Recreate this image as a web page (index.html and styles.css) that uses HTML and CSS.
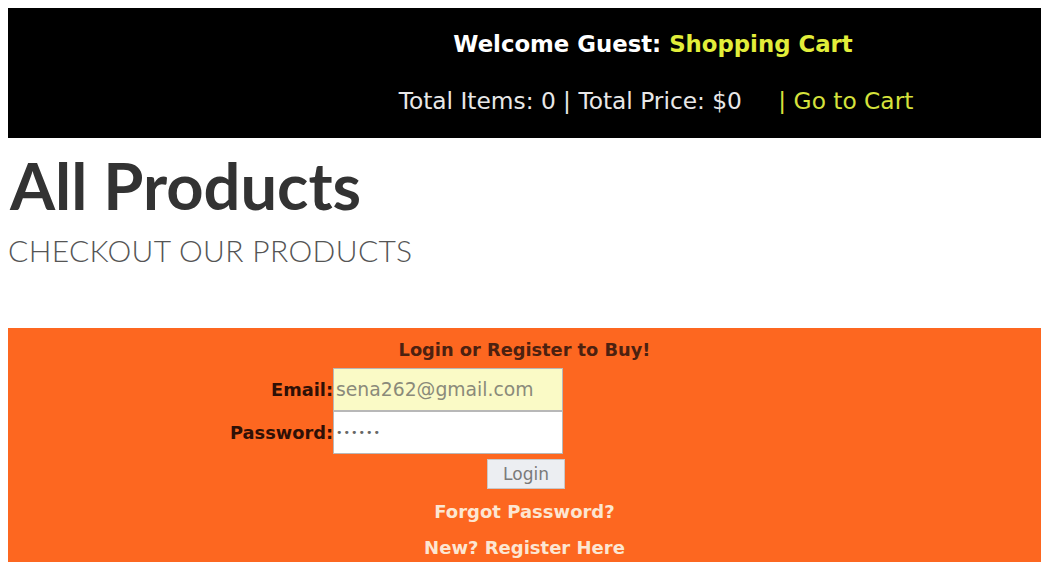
FILE: index.html
```html
<!DOCTYPE html>
<html lang="en">
<head>
<meta charset="utf-8">
<title>All Products</title>
<link rel="stylesheet" href="styles.css">
</head>
<body>
  <header class="topbar">
    <div class="cart-info">
      <p class="welcome">Welcome Guest: <span class="hl">Shopping Cart</span></p>
      <p class="totals">Total Items: 0 | Total Price: $0 <a class="cart-link" href="#">| Go to Cart</a></p>
    </div>
  </header>

  <section class="intro">
    <h1 class="title">All Products</h1>
    <p class="subtitle">CHECKOUT OUR PRODUCTS</p>
  </section>

  <section class="login-box">
    <h3 class="login-heading">Login or Register to Buy!</h3>
    <form class="login-form">
      <label class="field-label" for="email">Email:</label>
      <input class="field email" id="email" type="text" value="sena262@gmail.com">
      <label class="field-label" for="pass">Password:</label>
      <input class="field pass" id="pass" type="password" value="123456">
      <span></span>
      <div class="btn-cell"><button class="login-btn" type="button">Login</button></div>
    </form>
    <a class="login-link" href="#">Forgot Password?</a>
    <a class="login-link" href="#">New? Register Here</a>
  </section>
</body>
</html>
```

FILE: styles.css
```css
body {
  margin: 8px 0 0 8px;
  font-family: "DejaVu Sans", sans-serif;
  background: #fff;
  color: #333;
}

/* top bar with the cart summary */
.topbar {
  background: #000;
  height: 130px;
  padding-left: 343px;
  box-sizing: border-box;
}

.cart-info {
  width: 610px;
  display: flex;
  flex-direction: column;
  align-items: center;
  padding-top: 22px;
}

.cart-info p {
  margin: 0;
  font-size: 22.8px;
  line-height: 28px;
  white-space: nowrap;
}

.welcome {
  color: #fff;
  font-weight: 700;
  margin-right: 6px !important;
}

.hl { color: #e2ee3a; }

.cart-info .totals {
  color: #e8e8e8;
  font-size: 23.3px;
  margin-top: 29px;
}

.cart-link {
  color: #d6e23c;
  text-decoration: none;
  margin-left: 29px;
}

/* page heading */
.title {
  margin: 9px 0 0 2px;
  font-family: Lato, sans-serif;
  font-size: 65px;
  font-weight: 700;
  color: #333;
  line-height: 76px;
}

.subtitle {
  margin: 7px 0 0;
  font-family: Lato, sans-serif;
  font-size: 30px;
  font-weight: 300;
  letter-spacing: 0.35px;
  color: #555;
  line-height: 40px;
}

/* login panel */
.login-box {
  margin-top: 58px;
  background: #fd6720;
  padding: 11px 0 10px;
  display: flex;
  flex-direction: column;
}

.login-heading {
  margin: 0 0 7px;
  text-align: center;
  font-size: 17.8px;
  line-height: 22px;
  font-weight: 700;
  color: #4c2110;
}

.login-form {
  display: grid;
  grid-template-columns: 325px 230px;
  align-items: center;
}

.field-label {
  text-align: right;
  font-weight: 700;
  font-size: 17.8px;
  color: #2f1006;
}

.field {
  box-sizing: border-box;
  width: 230px;
  height: 43px;
  margin: 0;
  border: 1px solid #b8b8b8;
  font-family: "DejaVu Sans", sans-serif;
  font-size: 18.8px;
  padding: 0 2px;
  color: #8a8a7a;
  background: #fff;
  outline: none;
}

.field.email { background: #fafac6; }

.field.pass {
  font-size: 11px;
  color: #666;
  letter-spacing: 1px;
}

.btn-cell {
  display: flex;
  justify-content: flex-end;
  padding-top: 5px;
  margin-right: -2px;
}

.login-btn {
  width: 78px;
  height: 30px;
  padding: 0;
  font-family: "DejaVu Sans", sans-serif;
  font-size: 17px;
  color: #7a7a7a;
  background: #eceef2;
  border: 1px solid #c8c8c8;
}

.login-link {
  text-align: center;
  color: #fce6d2;
  font-weight: 700;
  font-size: 18px;
  text-decoration: none;
  line-height: 36px;
}

.login-link:first-of-type { margin-top: 5px; }
```
